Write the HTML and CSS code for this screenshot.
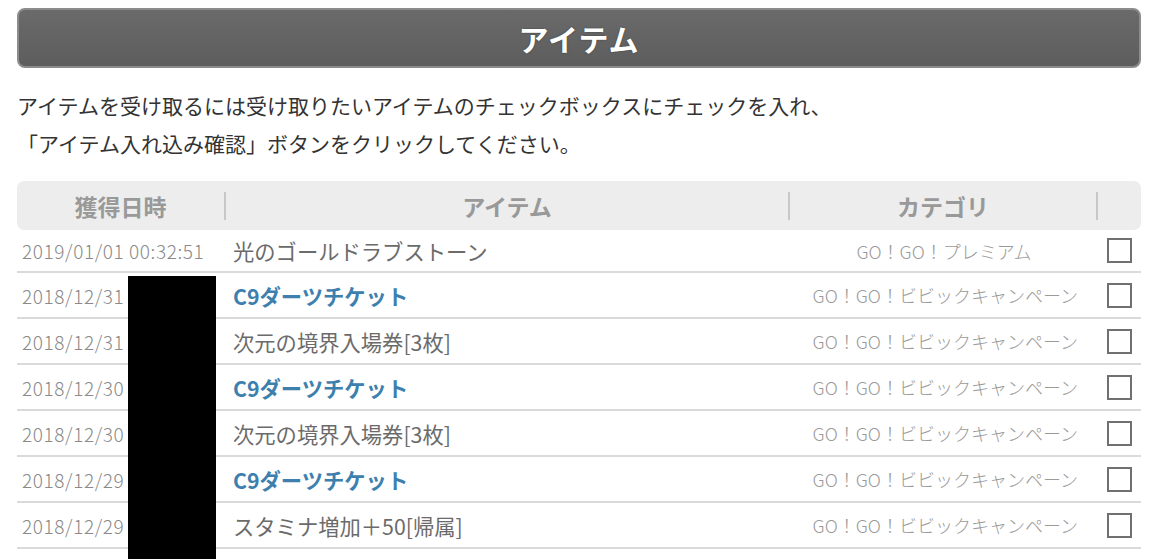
FILE: index.html
```html
<!DOCTYPE html>
<html lang="ja">
<head>
<meta charset="utf-8">
<title>アイテム</title>
<link rel="stylesheet" href="styles.css">
</head>
<body>
<div class="page">
  <h1 class="title-bar">アイテム</h1>
  <p class="intro">アイテムを受け取るには受け取りたいアイテムのチェックボックスにチェックを入れ、<br>「アイテム入れ込み確認」ボタンをクリックしてください。</p>
  <div class="table">
    <div class="thead">
      <div class="th">獲得日時</div>
      <div class="th">アイテム</div>
      <div class="th">カテゴリ</div>
      <div class="th th-last"></div>
    </div>
    <div class="row row-first">
      <div class="date">2019/01/01 00:32:51</div>
      <div class="item">光のゴールドラブストーン</div>
      <div class="cat cat-center">GO！GO！プレミアム</div>
      <div class="check"><span class="box"></span></div>
    </div>
    <div class="row">
      <div class="date">2018/12/31</div>
      <div class="item item-link">C9ダーツチケット</div>
      <div class="cat">GO！GO！ビビックキャンペーン</div>
      <div class="check"><span class="box"></span></div>
    </div>
    <div class="row">
      <div class="date">2018/12/31</div>
      <div class="item">次元の境界入場券[3枚]</div>
      <div class="cat">GO！GO！ビビックキャンペーン</div>
      <div class="check"><span class="box"></span></div>
    </div>
    <div class="row">
      <div class="date">2018/12/30</div>
      <div class="item item-link">C9ダーツチケット</div>
      <div class="cat">GO！GO！ビビックキャンペーン</div>
      <div class="check"><span class="box"></span></div>
    </div>
    <div class="row">
      <div class="date">2018/12/30</div>
      <div class="item">次元の境界入場券[3枚]</div>
      <div class="cat">GO！GO！ビビックキャンペーン</div>
      <div class="check"><span class="box"></span></div>
    </div>
    <div class="row">
      <div class="date">2018/12/29</div>
      <div class="item item-link">C9ダーツチケット</div>
      <div class="cat">GO！GO！ビビックキャンペーン</div>
      <div class="check"><span class="box"></span></div>
    </div>
    <div class="row">
      <div class="date">2018/12/29</div>
      <div class="item">スタミナ増加＋50[帰属]</div>
      <div class="cat">GO！GO！ビビックキャンペーン</div>
      <div class="check"><span class="box"></span></div>
    </div>
  </div>
  <div class="redact"></div>
</div>
</body>
</html>
```

FILE: styles.css
```css
html, body {
  margin: 0;
  padding: 0;
  background: #fff;
  height: 100%;
}
body {
  font-family: "Noto Sans CJK JP", "Noto Sans", sans-serif;
  color: #333;
}
.page {
  position: relative;
  width: 1124px;
  height: 559px;
  box-sizing: border-box;
  margin-left: 17px;
  padding-top: 8px;
}
.title-bar {
  margin: 0;
  height: 60px;
  box-sizing: border-box;
  border: 2px solid #8c8c8c;
  border-radius: 8px;
  background: linear-gradient(#6a6a6a, #5d5d5d);
  color: #fff;
  font-size: 30px;
  font-weight: bold;
  line-height: 56px;
  text-align: center;
  letter-spacing: 1px;
  text-shadow: 0 0 2px rgba(0,0,0,0.4);
}
.intro {
  margin: 18px 0 0;
  font-size: 21px;
  line-height: 38px;
  color: #333;
}
.table {
  margin-top: 19px;
}
.thead, .row {
  display: grid;
  grid-template-columns: 209px 564px 308px 43px;
}
.thead {
  height: 49px;
  background: #ededed;
  border-radius: 7px;
  align-items: center;
}
.th {
  text-align: center;
  font-size: 23px;
  font-weight: bold;
  color: #999;
  line-height: 28px;
  border-right: 2px solid #c8c8c8;
}
.th-last {
  border-right: none;
  height: 26px;
}
.row {
  height: 44px;
  border-bottom: 2px solid #dadada;
  align-items: center;
}
.row-first {
  height: 41px;
}
.date {
  padding-left: 5px;
  font-size: 19px;
  font-weight: 300;
  letter-spacing: 0.6px;
  color: #8a8a8a;
  white-space: nowrap;
}
.item {
  padding-left: 7px;
  font-size: 21.3px;
  color: #6b6b6b;
  white-space: nowrap;
}
.item-link {
  color: #3d80ae;
  font-weight: bold;
}
.cat {
  text-align: right;
  padding-right: 20px;
  font-size: 18px;
  font-weight: 300;
  color: #9a9a9a;
  white-space: nowrap;
}
.cat-center {
  text-align: center;
  padding-right: 0;
}
.check {
  display: flex;
  justify-content: center;
}
.box {
  display: block;
  width: 25px;
  height: 25px;
  box-sizing: border-box;
  border: 2px solid #707070;
  background: #fff;
  margin-left: -1px;
}
.redact {
  position: absolute;
  left: 111px;
  top: 276px;
  bottom: 0;
  width: 88px;
  background: #000;
}
```
